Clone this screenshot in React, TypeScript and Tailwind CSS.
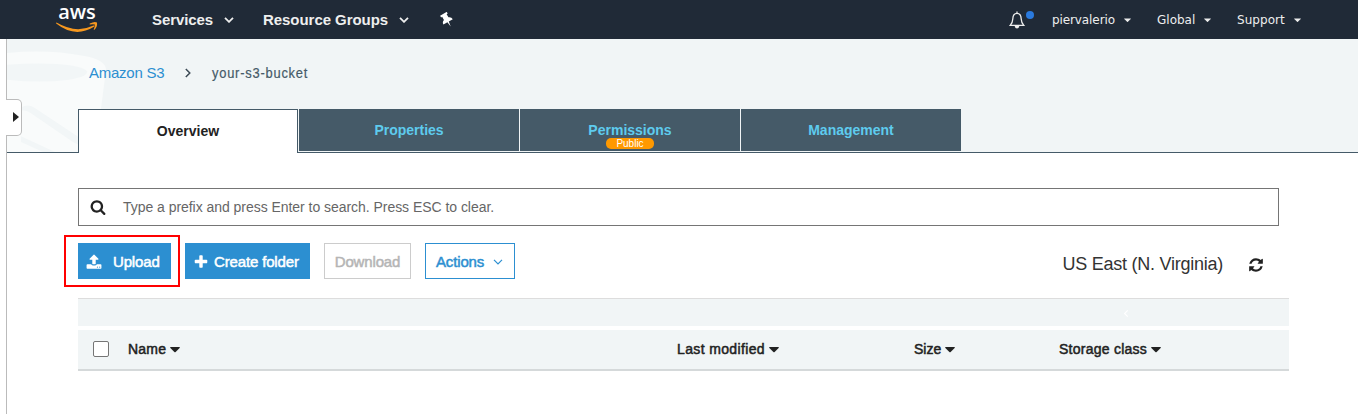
import React from "react";

const SEARCH = "M1216 832q0-185-131.5-316.5t-316.5-131.5-316.5 131.5-131.5 316.5 131.5 316.5 316.5 131.5 316.5-131.5 131.5-316.5zm512 832q0 52-38 90t-90 38q-54 0-90-38l-343-342q-179 124-399 124-143 0-273.5-55.5t-225-150-150-225-55.5-273.5 55.5-273.5 150-225 225-150 273.5-55.5 273.5 55.5 225 150 150 225 55.5 273.5q0 220-124 399l343 343q37 37 37 90z";
const REFRESH = "M1639 1056q0 5-1 7-64 268-268 434.5t-478 166.5q-146 0-282.5-55t-243.5-157l-129 129q-19 19-45 19t-45-19-19-45v-448q0-26 19-45t45-19h448q26 0 45 19t19 45-19 45l-137 137q71 66 161 102t187 36q134 0 250-65t186-179q11-17 53-117 8-23 30-23h192q13 0 22.5 9.5t9.5 22.5zm25-800v448q0 26-19 45t-45 19h-448q-26 0-45-19t-19-45 19-45l138-138q-148-137-349-137-134 0-250 65t-186 179q-11 17-53 117-8 23-30 23h-199q-13 0-22.5-9.5t-9.5-22.5v-7q65-268 270-434.5t480-166.5q146 0 284 55.5t245 156.5l130-129q19-19 45-19t45 19 19 45z";
const PLUS = "M1600 736v192q0 40-28 68t-68 28h-416v416q0 40-28 68t-68 28h-192q-40 0-68-28t-28-68v-416h-416q-40 0-68-28t-28-68v-192q0-40 28-68t68-28h416v-416q0-40 28-68t68-28h192q40 0 68 28t28 68v416h416q40 0 68 28t28 68z";
const UPLOAD = "M1344 1472q0-26-19-45t-45-19-45 19-19 45 19 45 45 19 45-19 19-45zm256 0q0-26-19-45t-45-19-45 19-19 45 19 45 45 19 45-19 19-45zm128-224v320q0 40-28 68t-68 28h-1472q-40 0-68-28t-28-68v-320q0-40 28-68t68-28h427q21 56 70.5 92t110.5 36h256q61 0 110.5-36t70.5-92h427q40 0 68 28t28 68zm-325-648q-17 40-59 40h-256v448q0 26-19 45t-45 19h-256q-26 0-45-19t-19-45v-448h-256q-42 0-59-40-17-39 14-69l448-448q18-19 45-19t45 19l448 448q31 30 14 69z";

function Glyph({ d, className }: { d: string; className: string }) {
  return (
    <svg viewBox="0 0 1792 1792" className={className} fill="currentColor">
      <path d={d} />
    </svg>
  );
}

function Chevron({ className, width = 1.5 }: { className: string; width?: number }) {
  return (
    <svg viewBox="0 0 10 6" className={className} fill="none" stroke="currentColor" strokeWidth={width}>
      <path d="M1 0.8 5 4.8 9 0.8" />
    </svg>
  );
}

function Caret({ className }: { className: string }) {
  return (
    <svg viewBox="0 0 10 6" className={className} fill="currentColor">
      <path d="M0.6 0H9.4Q10.2 0.2 9.6 0.9L5.6 4.9Q5 5.4 4.4 4.9L0.4 0.9Q-0.2 0.2 0.6 0Z" />
    </svg>
  );
}

function AccountMenu({ label, className, text }: { label: string; className: string; text: string }) {
  return (
    <div className={`flex shrink-0 items-center ${className}`}>
      <span className={`whitespace-nowrap ${text}`}>{label}</span>
      <Caret className="mt-[2px] ml-auto h-[5px] w-[7px]" />
    </div>
  );
}

function TopBar() {
  return (
    <header className="flex h-[39px] shrink-0 items-center bg-[#202a37] text-[#eeeeee]">
      <div className="ml-[55px] flex h-[39px] w-[44px] flex-col items-center">
        <span className="-mt-px h-[22px] font-['Open_Sans',sans-serif] text-[20px] leading-[26px] font-semibold tracking-[-0.1px] text-white">aws</span>
        <svg viewBox="0 0 44 12" className="h-[12px] w-[44px]">
          <path d="M1.5 1.6Q21 13 38.5 4.6Q40.5 4 39 5.8Q20 17.5 1.2 2.6Q0.8 1.6 1.5 1.6Z" fill="#f7981f" />
          <path d="M34.8 2.4Q39.5 0 42 1.4Q42.6 5.5 39.4 8.8Q38.4 9.4 38.9 8Q40.4 4.6 39.8 3.6Q38.8 2.9 35.2 3.5Q34 3.4 34.8 2.4Z" fill="#f7981f" />
        </svg>
      </div>
      <div className="ml-[53px] flex w-[82px] items-center pt-px font-['Liberation_Sans',sans-serif] text-[15px] font-bold">
        <span className="whitespace-nowrap tracking-[-0.1px]">Services</span>
        <Chevron className="ml-auto h-[6px] w-[10px]" width={1.8} />
      </div>
      <div className="ml-[29px] flex w-[146px] items-center pt-px font-['Liberation_Sans',sans-serif] text-[15px] font-bold">
        <span className="whitespace-nowrap tracking-[-0.05px]">Resource Groups</span>
        <Chevron className="ml-auto h-[6px] w-[10px]" width={1.8} />
      </div>
      <svg viewBox="0 0 14 16" className="ml-[31px] h-[16px] w-[14px] text-white" fill="currentColor">
        <g transform="rotate(-30 7 8)">
          <path d="M3.2 0.8H10.8V2.8H9.6V6.4Q12.4 7.4 12.4 10.2H7.8L7 15.4L6.2 10.2H1.6Q1.6 7.4 4.4 6.4V2.8H3.2Z" />
        </g>
      </svg>
      <div className="ml-auto flex items-center font-['DejaVu_Sans',sans-serif] text-[12px]">
        <div className="flex w-[26px] items-start">
          <svg viewBox="0 0 16 18" className="h-[18px] w-[16px]" fill="none" stroke="currentColor" strokeWidth="1.3">
            <path d="M8 0.6V2.2M1.2 14.4Q3.6 12 3.8 8Q4 2.4 8 2.4Q12 2.4 12.2 8Q12.4 12 14.8 14.4Z" />
            <path d="M5.4 14.6Q6 17.4 8 17.4Q10 17.4 10.6 14.6Z" fill="currentColor" stroke="none" />
          </svg>
          <span className="ml-[1px] h-[8px] w-[8px] rounded-full bg-[#2a7ade]" />
        </div>
        <AccountMenu label="piervalerio" className="ml-[17px] w-[79px]" text="tracking-[-0.1px]" />
        <AccountMenu label="Global" className="ml-[26px] w-[54px]" text="tracking-[0px]" />
        <AccountMenu label="Support" className="mr-[57px] ml-[26px] w-[64px]" text="tracking-[0.05px]" />
      </div>
    </header>
  );
}

function Bucket() {
  return (
    <svg viewBox="0 0 101 114" className="absolute top-0 left-0 h-[113px] w-[101px]" preserveAspectRatio="none">
      <path d="M0 14Q42 10 76 17Q99 21 99 31L94 70V114H0Z" fill="#f9fbfb" />
      <path d="M0 26Q40 23 66 27Q80 30 80 33Q80 38 62 41Q34 45 0 41Z" fill="#f2f6f7" />
      <path d="M14 69Q21 65 27 69L76 102V109L66 104L24 75Q20 72 14 72Z" fill="#f2f6f7" />
      <path d="M14 98L48 114H36L14 104Z" fill="#f2f6f7" />
    </svg>
  );
}

function Tab({ label, badge }: { label: string; badge?: string }) {
  return (
    <div className="flex h-[42px] w-[220px] flex-col items-center bg-[#455a68] pt-[12px] text-[#5ecbee]">
      <span className="h-[17px] text-[14px] leading-[18px] font-bold">{label}</span>
      {badge && (
        <span className="flex h-[11px] w-[48px] items-center justify-center rounded-[5px] bg-[#ff9900] text-[10px] leading-[11px] text-white">{badge}</span>
      )}
    </div>
  );
}

function PageHeader() {
  return (
    <div className="relative flex h-[114px] flex-col border-b border-[#455a68] bg-[#f1f5f6]">
      <Bucket />
      <nav className="relative flex h-[68px] items-center pl-[82px] text-[14px]">
        <a className="w-[98px] text-[15px] tracking-[-0.25px] text-[#2c8fd1]">Amazon S3</a>
        <Chevron className="-ml-[4px] h-[6px] w-[10px] -rotate-90 text-[#3c4a55]" />
        <span className="ml-[19px] origin-left scale-x-[0.86] whitespace-nowrap text-[15px] tracking-[0.9px] text-[#455a68] [-webkit-text-stroke:0.2px_currentColor]">your-s3-bucket</span>
      </nav>
      <div className="relative mt-[2px] flex gap-px pl-[71px]">
        <div className="z-10 -mb-px flex h-[44px] w-[220px] justify-center border border-b-0 border-[#455a68] bg-white pt-[12px] text-[14px] leading-[18px] font-bold text-[#222222]">Overview</div>
        <Tab label="Properties" />
        <Tab label="Permissions" badge="Public" />
        <Tab label="Management" />
      </div>
    </div>
  );
}

const MEDIUM = "[-webkit-text-stroke:0.5px_currentColor]";

function Toolbar() {
  return (
    <div className="flex items-center pl-[57px] text-[15px]">
      <div className="flex h-[52px] w-[116px] shrink-0 items-center border-2 border-[#ff0000] pl-[12px]">
        <button className="flex h-[36px] w-[93px] items-center bg-[#2c8fd1] pt-[2px] pl-[8px] text-white">
          <Glyph d={UPLOAD} className="h-[16px] w-[16px]" />
          <span className={`ml-[11px] tracking-[-0.15px] ${MEDIUM}`}>Upload</span>
        </button>
      </div>
      <button className="ml-[5px] flex h-[36px] w-[125px] items-center bg-[#2c8fd1] pt-[2px] pl-[8px] text-white">
        <Glyph d={PLUS} className="h-[16px] w-[16px]" />
        <span className={`ml-[5px] whitespace-nowrap tracking-[-0.15px] ${MEDIUM}`}>Create folder</span>
      </button>
      <button className="ml-[14px] flex h-[36px] w-[87px] items-center justify-center border border-[#cccccc] pt-[2px] text-[#b5b5b5]">
        <span className={`tracking-[-0.15px] ${MEDIUM}`}>Download</span>
      </button>
      <button className="ml-[14px] flex h-[36px] w-[90px] items-center border border-[#2c8fd1] pt-[2px] pl-[10px] text-[#2c8fd1]">
        <span className={`tracking-[-0.15px] ${MEDIUM}`}>Actions</span>
        <Chevron className="ml-[9px] h-[6px] w-[10px]" width={1.2} />
      </button>
      <div className="mt-[6px] mr-[94px] ml-auto flex items-center text-[18px] text-[#333333]">
        <span className="tracking-[-0.25px]">US East (N. Virginia)</span>
        <Glyph d={REFRESH} className="mt-[2px] ml-[25px] h-[16px] w-[16px] text-[#222222]" />
      </div>
    </div>
  );
}

function Column({ label, className, text = "" }: { label: string; className: string; text?: string }) {
  return (
    <div className={`flex items-center ${className}`}>
      <span className={`whitespace-nowrap ${MEDIUM} ${text}`}>{label}</span>
      <Caret className="ml-[4px] h-[6px] w-[10px]" />
    </div>
  );
}

export default function App() {
  return (
    <div className="flex h-[414px] w-[1358px] flex-col overflow-hidden bg-white font-['Liberation_Sans',sans-serif]">
      <TopBar />
      <div className="relative ml-[6px] flex flex-1 flex-col border-l border-[#bbbbbb]">
        <PageHeader />
        <div className="absolute top-[60px] -left-px z-10 flex h-[37px] w-[16px] items-center rounded-r-[5px] border border-l-0 border-[#bbbbbb] bg-white pb-px pl-[7px]">
          <svg viewBox="0 0 6 10" className="h-[10px] w-[6px]" fill="#222222">
            <path d="M0 0 6 5 0 10Z" />
          </svg>
        </div>
        <div className="mt-[35px] ml-[71px] flex h-[38px] w-[1201px] items-center border border-[#757575] pl-[11px]">
          <Glyph d={SEARCH} className="h-[16px] w-[16px] text-[#222222]" />
          <span className="ml-[17px] text-[14px] tracking-[-0.04px] text-[#666666]">Type a prefix and press Enter to search. Press ESC to clear.</span>
        </div>
        <div className="mt-[9px]">
          <Toolbar />
        </div>
        <div className="mt-[11px] ml-[71px] flex h-[28px] w-[1211px] items-center border-t border-[#dddddd] bg-[#f1f5f6] pt-px">
          <Chevron className="ml-[1044px] h-[5px] w-[8px] rotate-90 text-white" />
        </div>
        <div className="mt-[4px] ml-[71px] flex h-[41px] w-[1211px] items-center border-b-2 border-[#d5d9da] bg-[#f1f5f6] text-[14px] text-[#222222]">
          <span className="-mt-px ml-[15px] h-[16px] w-[16px] rounded-[2px] border border-[#757575] bg-white" />
          <Column label="Name" className="ml-[19px] w-[549px]" text="tracking-[0.2px]" />
          <Column label="Last modified" className="w-[237px]" text="tracking-[0.36px]" />
          <Column label="Size" className="w-[145px]" />
          <Column label="Storage class" className="w-[200px]" text="tracking-[0.25px]" />
        </div>
      </div>
    </div>
  );
}
